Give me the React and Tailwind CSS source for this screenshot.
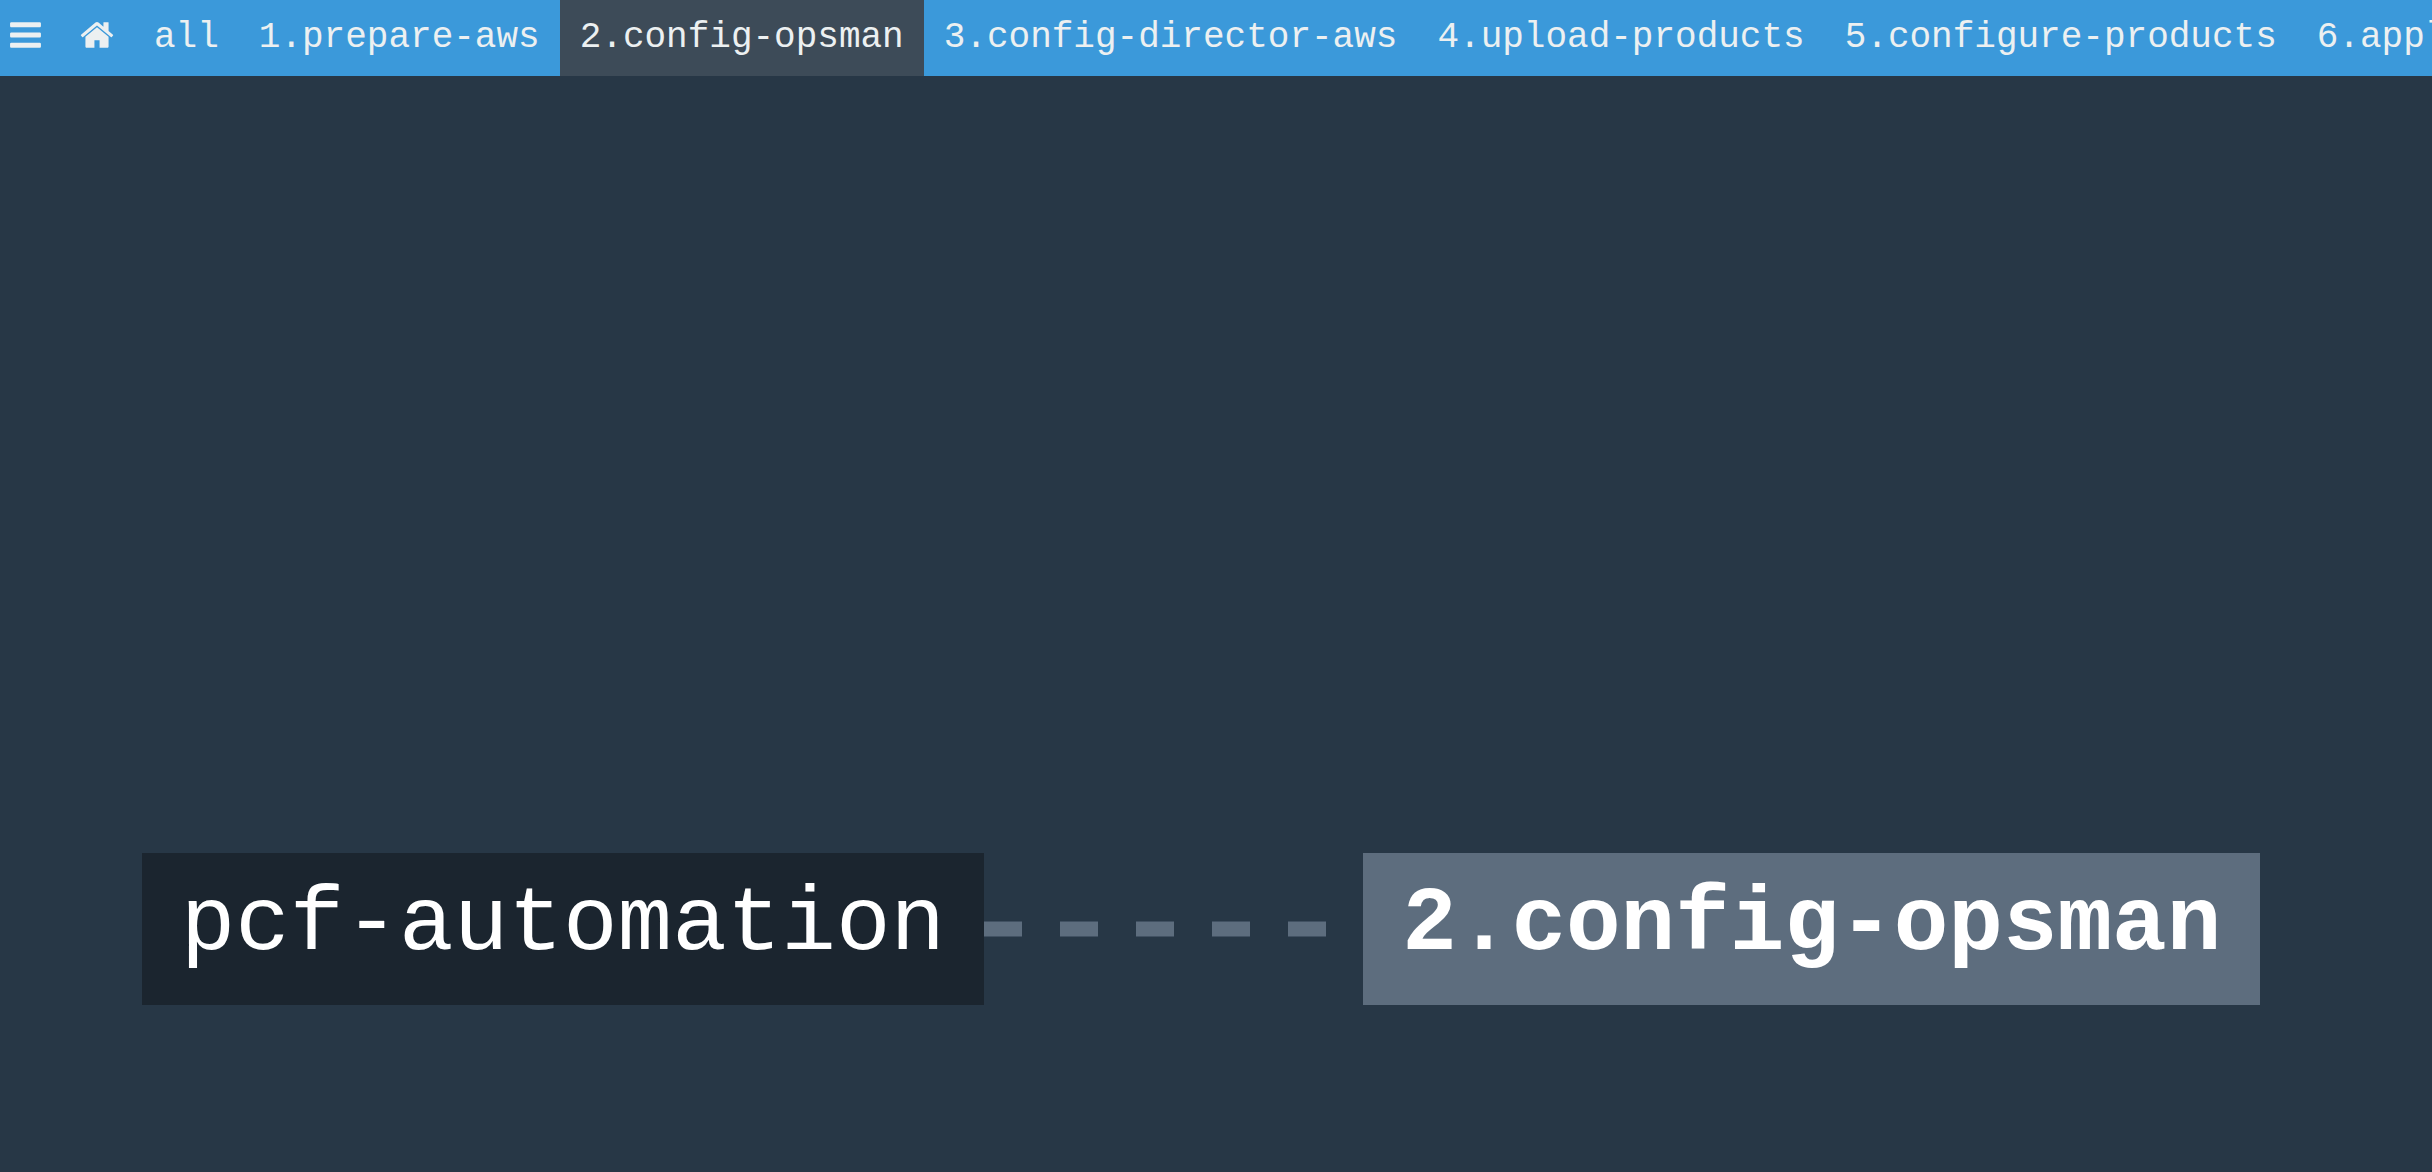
const groups = [
  'all',
  '1.prepare-aws',
  '2.config-opsman',
  '3.config-director-aws',
  '4.upload-products',
  '5.configure-products',
  '6.apply-changes',
];

const activeGroup = '2.config-opsman';

function BarsIcon() {
  return (
    <svg viewBox="128 0 1536 1792" className="h-9 w-[31px] fill-current" aria-hidden="true">
      <path d="M1664 1344v128q0 26-19 45t-45 19h-1408q-26 0-45-19t-19-45v-128q0-26 19-45t45-19h1408q26 0 45 19t19 45zm0-512v128q0 26-19 45t-45 19h-1408q-26 0-45-19t-19-45v-128q0-26 19-45t45-19h1408q26 0 45 19t19 45zm0-512v128q0 26-19 45t-45 19h-1408q-26 0-45-19t-19-45v-128q0-26 19-45t45-19h1408q26 0 45 19t19 45z" />
    </svg>
  );
}

function HomeIcon() {
  return (
    <svg viewBox="0 0 1664 1792" className="h-9 w-[34px] fill-current" aria-hidden="true">
      <path d="M1408 992v480q0 26-19 45t-45 19h-384v-384h-256v384h-384q-26 0-45-19t-19-45v-480q0-1 .5-3t.5-3l575-474 575 474q1 2 1 6zm223-69l-62 74q-8 9-21 11h-3q-13 0-21-7l-692-577-692 577q-12 8-24 7-13-2-21-11l-62-74q-8-10-7-23.5t11-21.5l719-599q32-26 76-26t76 26l244 204v-195q0-14 9-23t23-9h192q14 0 23 9t9 23v408l219 182q10 8 11 21.5t-7 23.5z" />
    </svg>
  );
}

function GroupLink({ name }) {
  const active = name === activeGroup;
  return (
    <a
      href={'#' + name}
      aria-current={active ? 'page' : undefined}
      className={active ? 'shrink-0 bg-[#3d4b58] p-5' : 'shrink-0 p-5'}
    >
      {name}
    </a>
  );
}

export default function App() {
  return (
    <div className="flex min-h-screen flex-col overflow-hidden bg-[#273746] font-['Courier_New','Liberation_Mono',monospace]">
      <nav className="flex overflow-hidden whitespace-nowrap bg-[#3b99da] text-[36px] leading-9 text-[#ecf0f1]">
        <button type="button" aria-label="Menu" className="shrink-0 pt-[17px] pr-[19px] pb-[23px] pl-[10px]">
          <BarsIcon />
        </button>
        <a href="#home" aria-label="Home" className="shrink-0 px-5 pt-[17px] pb-[23px]">
          <HomeIcon />
        </a>
        {groups.map((name) => (
          <GroupLink key={name} name={name} />
        ))}
      </nav>

      <main className="flex grow flex-col">
        <div className="grow-[14]" />
        <div className="flex items-center justify-center pr-[30px] text-[91px] leading-[80px] whitespace-nowrap text-white">
          <a href="#pcf-automation" className="bg-[#1b252f] px-[39px] pt-8 pb-10">
            pcf-automation
          </a>
          <svg className="h-4 w-[379px]" aria-hidden="true">
            <line x1="0" y1="8" x2="379" y2="8" stroke="#5d6d7e" strokeWidth="15" strokeDasharray="38" />
          </svg>
          <a href="#2.config-opsman" className="bg-[#5d6d7e] px-[39px] pt-8 pb-10 font-bold">
            2.config-opsman
          </a>
        </div>
        <div className="grow-[3]" />
      </main>
    </div>
  );
}
